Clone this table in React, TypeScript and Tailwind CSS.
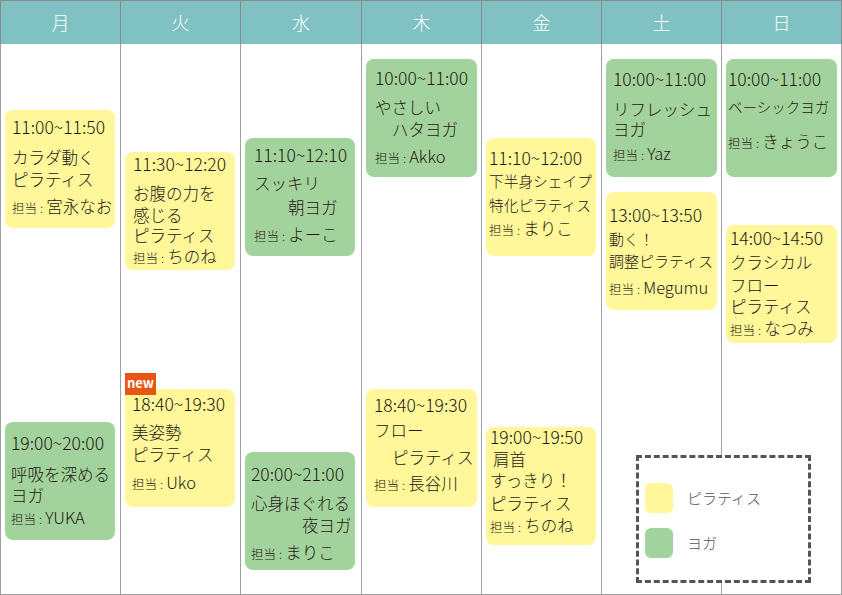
import React from 'react';
import { twMerge } from 'tailwind-merge';
import clsx from 'clsx';

const days = ['月', '火', '水', '木', '金', '土', '日'];

const cn = (...args: Parameters<typeof clsx>) => twMerge(clsx(...args));

type CardProps = {
  green?: boolean;
  className?: string;
  children: React.ReactNode;
};

function Card({ green, className, children }: CardProps) {
  return (
    <div
      className={cn(
        'relative w-[110px] h-[118px] shrink-0 rounded-[8px] text-[#231815]',
        green ? 'bg-[#a3d39c]' : 'bg-[#fff799]',
        className
      )}
    >
      {children}
    </div>
  );
}

function Time({ children, className }: { children: React.ReactNode; className?: string }) {
  return <div className={cn('text-[17.5px] leading-[20px] whitespace-nowrap', className)}>{children}</div>;
}

function Line({ children, className }: { children: React.ReactNode; className?: string }) {
  return <div className={cn('text-[16.5px] leading-[20px] whitespace-nowrap', className)}>{children}</div>;
}

function Staff({ name, className }: { name: string; className?: string }) {
  return (
    <div className={cn('leading-[20px] whitespace-nowrap', className)}>
      <span className="text-[12.5px]">担当</span>
      <span className="text-[12.5px] mx-[3px]">:</span>
      <span className="text-[16.5px]">{name}</span>
    </div>
  );
}

export default function App() {
  return (
    <div className="relative w-[842px] h-[595px] bg-white font-light font-['Noto_Sans_CJK_JP',sans-serif] overflow-hidden">
      {/* header */}
      <div className="grid grid-cols-[120px_120px_121px_120px_120px_120px_121px] h-[44px] border-t border-[#8a8a8a] bg-[#80c2c4]">
        {days.map((d, i) => (
          <div
            key={d}
            className={cn(
              'flex items-center justify-center border-l border-[#8a8a8a] text-[18px] text-white',
              i === 6 && 'border-r'
            )}
          >
            {d}
          </div>
        ))}
      </div>

      {/* body */}
      <div className="grid grid-cols-[120px_120px_121px_120px_120px_120px_121px] h-[551px] border-b border-[#a0a0a0]">
        {/* 月 */}
        <div className="flex flex-col pl-[4px] border-l border-[#a0a0a0]">
          <Card className="mt-[66px] pl-[7px] pt-[7px]">
            <Time>11:00~11:50</Time>
            <Line className="mt-[10px]">カラダ動く</Line>
            <Line className="mt-[2px]">ピラティス</Line>
            <Staff name="宮永なお" className="mt-[7px]" />
          </Card>
          <Card green className="mt-[194px] pl-[6px] pt-[11px]">
            <Time>19:00~20:00</Time>
            <Line className="mt-[11px]">呼吸を深める</Line>
            <Line className="mt-[1px]">ヨガ</Line>
            <Staff name="YUKA" className="mt-[2px]" />
          </Card>
        </div>

        {/* 火 */}
        <div className="flex flex-col pl-[4px] border-l border-[#a0a0a0]">
          <Card className="mt-[108px] pl-[8px] pt-[2px]">
            <Time>11:30~12:20</Time>
            <Line className="mt-[9px]">お腹の力を</Line>
            <Line className="mt-[2px]">感じる</Line>
            <Line>ピラティス</Line>
            <Staff name="ちのね" className="mt-[1px]" />
          </Card>
          <Card className="mt-[119px] pl-[7px] pt-[5px]">
            <div className="absolute left-0 top-[-16px] w-[31px] h-[22px] bg-[#e95513] text-white text-[13px] font-bold leading-[20px] text-center">
              new
            </div>
            <Time>18:40~19:30</Time>
            <Line className="mt-[8px]">美姿勢</Line>
            <Line className="mt-[2px]">ピラティス</Line>
            <Staff name="Uko" className="mt-[8px]" />
          </Card>
        </div>

        {/* 水 */}
        <div className="flex flex-col pl-[4px] border-l border-[#a0a0a0]">
          <Card green className="mt-[94px] pl-[9px] pt-[7px]">
            <Time>11:10~12:10</Time>
            <Line className="mt-[8px]">スッキリ</Line>
            <Line className="mt-[4px] ml-[34px]">朝ヨガ</Line>
            <Staff name="よーこ" className="mt-[7px]" />
          </Card>
          <Card green className="mt-[196px] pl-[6px] pt-[12px]">
            <Time>20:00~21:00</Time>
            <Line className="mt-[9px]">心身ほぐれる</Line>
            <Line className="mt-[2px] ml-[51px]">夜ヨガ</Line>
            <Staff name="まりこ" className="mt-[7px]" />
          </Card>
        </div>

        {/* 木 */}
        <div className="flex flex-col pl-[4px] border-l border-[#a0a0a0]">
          <Card green className="mt-[15px] w-[111px] pl-[9px] pt-[9px]">
            <Time>10:00~11:00</Time>
            <Line className="mt-[9px]">やさしい</Line>
            <Line className="mt-[2px] ml-[17px]">ハタヨガ</Line>
            <Staff name="Akko" className="mt-[7px]" />
          </Card>
          <Card className="mt-[212px] w-[111px] pl-[8px] pt-[6px]">
            <Time>18:40~19:30</Time>
            <Line className="mt-[5px]">フロー</Line>
            <Line className="mt-[7px] ml-[18px]">ピラティス</Line>
            <Staff name="長谷川" className="mt-[6px]" />
          </Card>
        </div>

        {/* 金 */}
        <div className="flex flex-col pl-[4px] border-l border-[#a0a0a0]">
          <Card className="mt-[94px] pl-[3px] pt-[10px]">
            <Time>11:10~12:00</Time>
            <Line className="mt-[2px] text-[14.7px]">下半身シェイプ</Line>
            <Line className="mt-[2px] text-[14.7px]">特化ピラティス</Line>
            <Staff name="まりこ" className="mt-[2px]" />
          </Card>
          <Card className="mt-[171px] pl-[4px] pt-0">
            <Time>19:00~19:50</Time>
            <Line className="mt-[2px] ml-[3px]">肩首</Line>
            <Line className="mt-[1px]">すっきり！</Line>
            <Line className="mt-[3px]">ピラティス</Line>
            <Staff name="ちのね" className="mt-[2px]" />
          </Card>
        </div>

        {/* 土 */}
        <div className="flex flex-col pl-[4px] border-l border-[#a0a0a0]">
          <Card green className="mt-[15px] w-[111px] pl-[7px] pt-[10px]">
            <Time>10:00~11:00</Time>
            <Line className="mt-[10px]">リフレッシュ</Line>
            <Line>ヨガ</Line>
            <Staff name="Yaz" className="mt-[4px]" />
          </Card>
          <Card className="mt-[15px] w-[111px] pl-[3px] pt-[13px]">
            <Time>13:00~13:50</Time>
            <Line className="mt-[3px] text-[15px]">動く！</Line>
            <Line className="-mt-[1px] text-[15px]">調整ピラティス</Line>
            <Staff name="Megumu" className="mt-[5px]" />
          </Card>
        </div>

        {/* 日 */}
        <div className="flex flex-col pl-[4px] border-l border-r border-[#a0a0a0]">
          <Card green className="mt-[15px] w-[111px] pl-[2px] pt-[10px]">
            <Time>10:00~11:00</Time>
            <Line className="mt-[7px] text-[14.5px]">ベーシックヨガ</Line>
            <Staff name="きょうこ" className="mt-[13px]" />
          </Card>
          <Card className="mt-[48px] w-[111px] pl-[4px] pt-[3px]">
            <Time>14:00~14:50</Time>
            <Line className="mt-[4px]">クラシカル</Line>
            <Line className="mt-[3px]">フロー</Line>
            <Line className="mt-[1px]">ピラティス</Line>
            <Staff name="なつみ" className="mt-[2px]" />
          </Card>
        </div>
      </div>

      {/* legend */}
      <div className="absolute left-[636px] top-[455px] w-[175px] h-[128px] bg-white border-[3px] border-dashed border-[#555] pl-[6px] pt-[25px] flex flex-col gap-[15px]">
        <div className="flex items-center gap-[14px]">
          <div className="w-[28px] h-[30px] rounded-[6px] bg-[#fff799]" />
          <span className="text-[15px] text-[#555]">ピラティス</span>
        </div>
        <div className="flex items-center gap-[14px]">
          <div className="w-[28px] h-[30px] rounded-[6px] bg-[#a3d39c]" />
          <span className="text-[15px] text-[#555]">ヨガ</span>
        </div>
      </div>
    </div>
  );
}
